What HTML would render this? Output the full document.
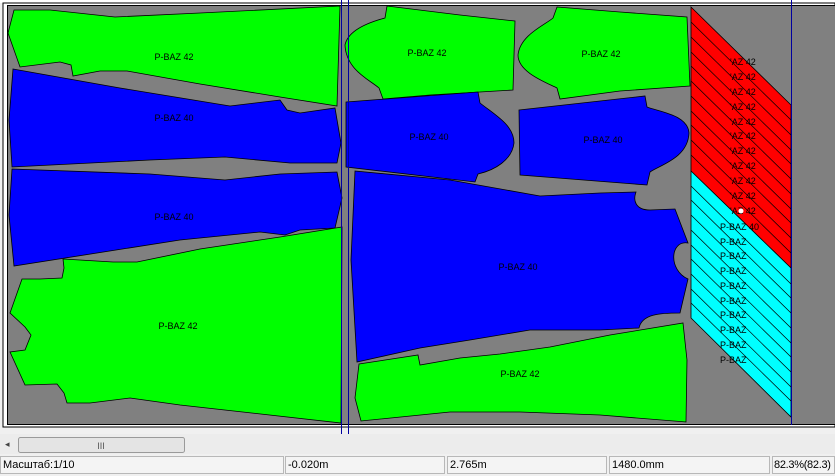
<!DOCTYPE html>
<html><head><meta charset="utf-8"><style>
html,body{margin:0;width:835px;height:476px;overflow:hidden;background:#f0f0f0;font-family:"Liberation Sans",sans-serif}
.sb{position:absolute;top:456px;height:18px;border:1px solid #b8b8b8;background:#f4f4f4;font-size:11px;line-height:16px;padding-left:2px;box-sizing:border-box;color:#000;white-space:nowrap;overflow:hidden}
</style></head><body>
<svg width="835" height="456" style="position:absolute;left:0;top:0" xmlns="http://www.w3.org/2000/svg">
<rect x="0" y="0" width="835" height="456" fill="#f0f0f0"/>
<rect x="0" y="0" width="835" height="3" fill="#fff"/>
<rect x="3" y="3" width="832" height="424" fill="#fff" stroke="#000" stroke-width="1"/>
<rect x="7.5" y="5.5" width="828" height="419" fill="#808080" stroke="#000" stroke-width="1"/>
<g stroke="#000" stroke-width="0.8">
<path fill="#00ff00" d="M14,10 L50,10 L115,17 L200,13 L340,6 L337,106 L280,97 L200,84 L127,71 L100,71 L73,76 L71,65 L60,62 L20,67 L8,33 Z"/>
<path fill="#0000ff" d="M13,69 L120,88 L230,106 L280,100 L287,110 L300,113 L335,108 L341,143 L337,163 L290,163 L225,157 L150,160 L12,167 L9,120 Z"/>
<path fill="#0000ff" d="M12,169 L150,174 L225,180 L280,174 L337,172 L342,198 L335,228 L300,230 L285,235 L260,232 L180,240 L14,266 L9,215 Z"/>
<path fill="#00ff00" d="M63,259 L113,262 L137,262 L200,249 L280,237 L342,227 L341,423 L180,405 L130,398 L90,403 L67,403 L64,393 L57,384 L25,385 L10,352 L25,350 L31,335 L25,327 L10,313 L22,279 L40,279 L62,278 L64,268 Z"/>
<path fill="#00ff00" d="M387,6 L460,15 L515,21 L513,90 L430,95 L383,99 L379,88 C370,80 346,70 345,45 C348,30 370,22 385,18 Z"/>
<path fill="#00ff00" d="M557,7 L620,12 L687,17 L690,86 L620,91 L560,99 L557,88 C545,82 518,72 518,55 C520,35 545,25 553,18 Z"/>
<path fill="#0000ff" d="M346,102 L478,92 L480,103 C495,115 514,125 514,143 C512,160 495,170 478,174 L475,182 L346,167 Z"/>
<path fill="#0000ff" d="M519,110 L645,96 L647,107 C660,112 688,115 689,133 C688,158 660,165 650,172 L647,185 L520,175 Z"/>
<path fill="#0000ff" d="M355,171 L450,180 L540,196 L600,193 L636,192 C633,200 635,210 650,210 L675,209 L688,243 C670,240 668,270 688,279 L680,313 C660,313 642,314 639,328 L600,330 L530,330 L470,340 L420,348 L357,362 L351,260 Z"/>
<path fill="#00ff00" d="M359,364 L418,355 L420,365 L460,358 L500,354 L550,347 L610,335 L683,323 L687,360 L686,422 L600,415 L520,412 L450,412 L361,421 L355,398 Z"/>
</g>
<defs>
<clipPath id="pr"><path d="M691,7 L791,105 L791,268 L691,171 Z"/></clipPath>
<clipPath id="pc"><path d="M691,171 L791,268 L791,417 L691,318 Z"/></clipPath>
</defs>
<path d="M691,7 L791,105 L791,268 L691,171 Z" fill="#ff0000" stroke="#000" stroke-width="0.8"/>
<path d="M691,171 L791,268 L791,417 L691,318 Z" fill="#00ffff" stroke="#000" stroke-width="0.8"/>
<g stroke="#000" stroke-width="0.7" clip-path="url(#pr)">
<path d="M691,22l100,98M691,37l100,98M691,52l100,98M691,66l100,98M691,81l100,98M691,96l100,98M691,111l100,98M691,125l100,98M691,140l100,98M691,155l100,98"/>
</g>
<g stroke="#000" stroke-width="0.7" clip-path="url(#pc)">
<path d="M691,186l100,98M691,200l100,98M691,215l100,98M691,230l100,98M691,245l100,98M691,259l100,98M691,274l100,98M691,289l100,98M691,303l100,98"/>
</g>
<g font-family="Liberation Sans,sans-serif" font-size="9" fill="#000" text-anchor="middle">
<text x="174" y="60">P-BAZ 42</text>
<text x="174" y="121">P-BAZ 40</text>
<text x="174" y="220">P-BAZ 40</text>
<text x="178" y="329">P-BAZ 42</text>
<text x="427" y="56">P-BAZ 42</text>
<text x="601" y="57">P-BAZ 42</text>
<text x="429" y="140">P-BAZ 40</text>
<text x="603" y="143">P-BAZ 40</text>
<text x="518" y="270">P-BAZ 40</text>
<text x="520" y="377">P-BAZ 42</text>
</g>
<g font-family="Liberation Sans,sans-serif" font-size="9" fill="#000">
<text x="730" y="65">'AZ 42</text><text x="730" y="80">'AZ 42</text><text x="730" y="95">'AZ 42</text><text x="730" y="110">'AZ 42</text><text x="730" y="125">'AZ 42</text><text x="730" y="139">'AZ 42</text><text x="730" y="154">'AZ 42</text><text x="730" y="169">'AZ 42</text><text x="730" y="184">'AZ 42</text><text x="730" y="199">'AZ 42</text><text x="730" y="214">'AZ 42</text>
<text x="720" y="230">P-BAZ 40</text><text x="720" y="245">P-BAZ</text><text x="720" y="259">P-BAZ</text><text x="720" y="274">P-BAZ</text><text x="720" y="289">P-BAZ</text><text x="720" y="304">P-BAZ</text><text x="720" y="318">P-BAZ</text><text x="720" y="333">P-BAZ</text><text x="720" y="348">P-BAZ</text><text x="720" y="363">P-BAZ</text>
</g>
<circle cx="741" cy="211" r="2.5" fill="#fff"/>
<line x1="341.5" y1="0" x2="341.5" y2="436" stroke="#0000a0" stroke-width="1"/>
<line x1="348.5" y1="0" x2="348.5" y2="436" stroke="#0000a0" stroke-width="1"/>
<line x1="791.5" y1="0" x2="791.5" y2="425" stroke="#0000a0" stroke-width="1"/>
<rect x="0" y="434" width="835" height="20" fill="#ececec"/>
<text x="5" y="447" font-size="9" fill="#444">◂</text>
<rect x="18.5" y="437.5" width="166" height="15" rx="2" fill="#e4e4e4" stroke="#9a9a9a"/>
<text x="101" y="449" font-size="9" fill="#555" text-anchor="middle">III</text>
</svg>
<div class="sb" style="left:0;width:284px">Масштаб:1/10</div>
<div class="sb" style="left:285px;width:160px">-0.020m</div>
<div class="sb" style="left:447px;width:160px">2.765m</div>
<div class="sb" style="left:609px;width:161px">1480.0mm</div>
<div class="sb" style="left:772px;width:63px;padding-left:1px;letter-spacing:-0.3px">82.3%(82.3)</div>
</body></html>
